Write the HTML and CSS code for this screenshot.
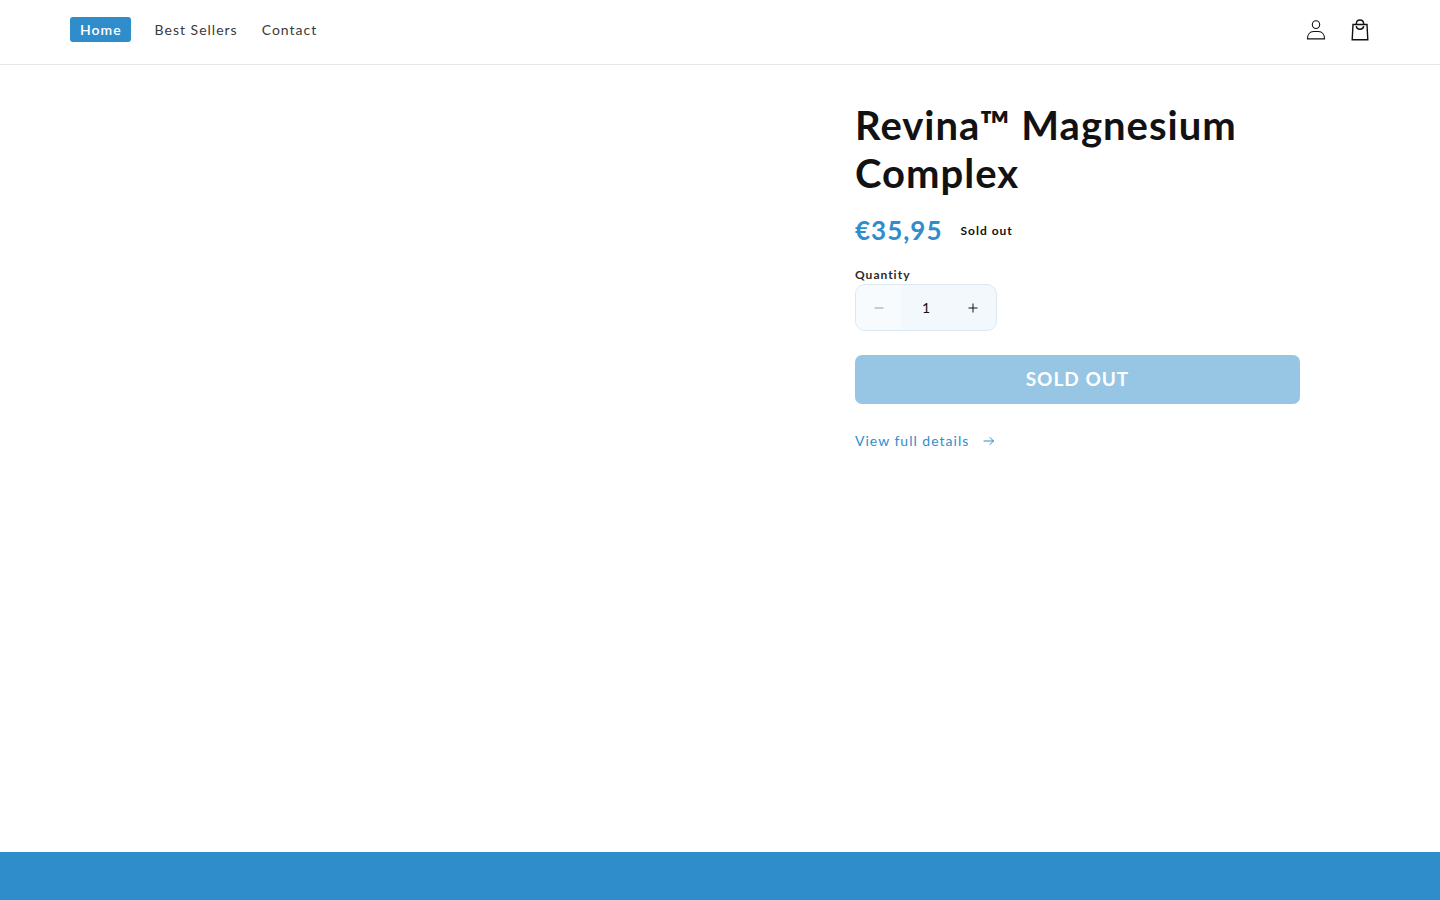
FILE: index.html
```html
<!DOCTYPE html>
<html lang="en">
<head>
<meta charset="utf-8">
<meta name="viewport" content="width=device-width, initial-scale=1">
<title>Revina™ Magnesium Complex</title>
<link rel="stylesheet" href="styles.css">
</head>
<body>
<header class="header">
  <nav class="menu" aria-label="Main">
    <a class="menu-link menu-link-active" href="#" aria-current="page">Home</a>
    <a class="menu-link" href="#">Best Sellers</a>
    <a class="menu-link" href="#">Contact</a>
  </nav>
  <div class="header-icons">
    <a class="header-icon" href="#" aria-label="Log in">
      <svg width="20" height="20" viewBox="0 0 20 20" fill="none" stroke="#121212" stroke-width="1.1" aria-hidden="true">
        <ellipse cx="10" cy="4.6" rx="3.7" ry="3.9"/>
        <path d="M1.5 18.9C1.5 14.4 4 11.5 7.5 11.5h5c3.500 0 6 2.900 6 7.400z"/>
      </svg>
    </a>
    <a class="header-icon" href="#" aria-label="Cart">
      <svg width="20" height="22" viewBox="0 0 20 22" fill="none" stroke="#121212" stroke-width="1.400" aria-hidden="true">
        <path d="M3 5.500h14l.8 15.200H2.200z"/>
        <path d="M6.300 5.200C6.300 2.500 7.800 1 10 1s3.700 1.500 3.700 4.200"/>
        <path d="M6.300 7.100c.2 2 1.800 3.100 3.700 3.100s3.500-1.100 3.700-3.100"/>
      </svg>
    </a>
  </div>
</header>
<main class="product">
  <section class="product-info">
    <h1 class="title">Revina™ Magnesium Complex</h1>
    <div class="price-row">
      <span class="price">€35,95</span>
      <span class="badge">Sold out</span>
    </div>
    <label class="quantity-label" for="quantity">Quantity</label>
    <div class="quantity">
      <button class="quantity-button" type="button" aria-label="Decrease quantity" disabled>
        <svg width="10" height="10" viewBox="0 0 10 10" stroke="currentColor" aria-hidden="true"><path d="M.5 5h9"/></svg>
      </button>
      <input class="quantity-input" id="quantity" type="text" inputmode="numeric" value="1">
      <button class="quantity-button" type="button" aria-label="Increase quantity">
        <svg width="10" height="10" viewBox="0 0 10 10" stroke="currentColor" aria-hidden="true"><path d="M.5 5h9M5 .5v9"/></svg>
      </button>
    </div>
    <button class="submit" type="button" disabled>SOLD OUT</button>
    <a class="details" href="#">View full details
      <svg width="12" height="10" viewBox="0 0 12 10" fill="none" stroke="currentColor" stroke-linecap="round" stroke-linejoin="round" aria-hidden="true"><path d="M1 5h9.500M7 1.500 10.500 5 7 8.500"/></svg>
    </a>
  </section>
</main>
<section class="band"></section>
</body>
</html>
```
FILE: styles.css
```css
* {
  box-sizing: border-box;
}

body {
  display: flex;
  flex-direction: column;
  min-height: 100vh;
  margin: 0;
  background: #fff;
  color: #121212;
  font-family: Lato, sans-serif;
}

.header {
  display: flex;
  align-items: center;
  justify-content: space-between;
  padding: 8px 58px 12px 70px;
  border-bottom: 1px solid #e7e7e7;
}

.menu {
  display: flex;
  align-items: center;
  gap: 24px;
  padding-bottom: 1px;
}

.menu-link {
  color: #3a3a3a;
  font-size: 14px;
  line-height: 25px;
  letter-spacing: 1px;
  text-decoration: none;
}

.menu-link-active {
  padding: 0 9px 0 10px;
  border-radius: 3px;
  background: #308dcc;
  color: #fff;
  font-weight: 600;
}

.header-icons {
  display: flex;
}

.header-icon {
  display: flex;
  align-items: center;
  justify-content: center;
  width: 44px;
  height: 44px;
}

.product {
  display: flex;
  flex: 1;
  justify-content: flex-end;
  padding: 36px 140px;
}

.product-info {
  display: flex;
  flex-direction: column;
  align-items: flex-start;
  width: 445px;
}

.title {
  margin: 0;
  font-size: 40px;
  font-weight: 700;
  line-height: 48px;
  letter-spacing: 1px;
}

.price-row {
  display: flex;
  align-items: center;
  gap: 18px;
  margin-top: 16px;
}

.price {
  color: #308dcc;
  font-size: 26px;
  font-weight: 700;
  line-height: 34px;
  letter-spacing: 1px;
}

.badge {
  font-size: 12px;
  font-weight: 700;
  letter-spacing: 1px;
}

.quantity-label {
  margin-top: 18px;
  color: #2a2a2a;
  font-size: 12px;
  font-weight: 700;
  line-height: 19px;
  letter-spacing: 1px;
}

.quantity {
  display: flex;
  width: 142px;
  height: 47px;
  overflow: hidden;
  border: 1px solid #dce8f1;
  border-radius: 10px;
  background: #f3f8fc;
}

.quantity-button {
  display: flex;
  align-items: center;
  justify-content: center;
  width: 46px;
  padding: 0;
  border: 0;
  background: transparent;
  color: #121212;
}

.quantity-button:disabled {
  background: #f8fbfe;
  color: #999;
}

.quantity-input {
  flex: 1;
  min-width: 0;
  padding: 0;
  border: 0;
  background: transparent;
  color: #121212;
  font: 14px Lato, sans-serif;
  text-align: center;
}

.submit {
  width: 100%;
  height: 49px;
  margin-top: 24px;
  padding: 0 0 2px;
  border: 0;
  border-radius: 7px;
  background: #97c6e5;
  color: #fff;
  font: 700 19px Lato, sans-serif;
  letter-spacing: 1px;
}

.details {
  display: flex;
  align-items: center;
  gap: 14px;
  margin-top: 24px;
  color: #308dcc;
  font-size: 14px;
  line-height: 26px;
  letter-spacing: 1px;
  text-decoration: none;
}

.band {
  height: 48px;
  background: #308dcc;
}
```
